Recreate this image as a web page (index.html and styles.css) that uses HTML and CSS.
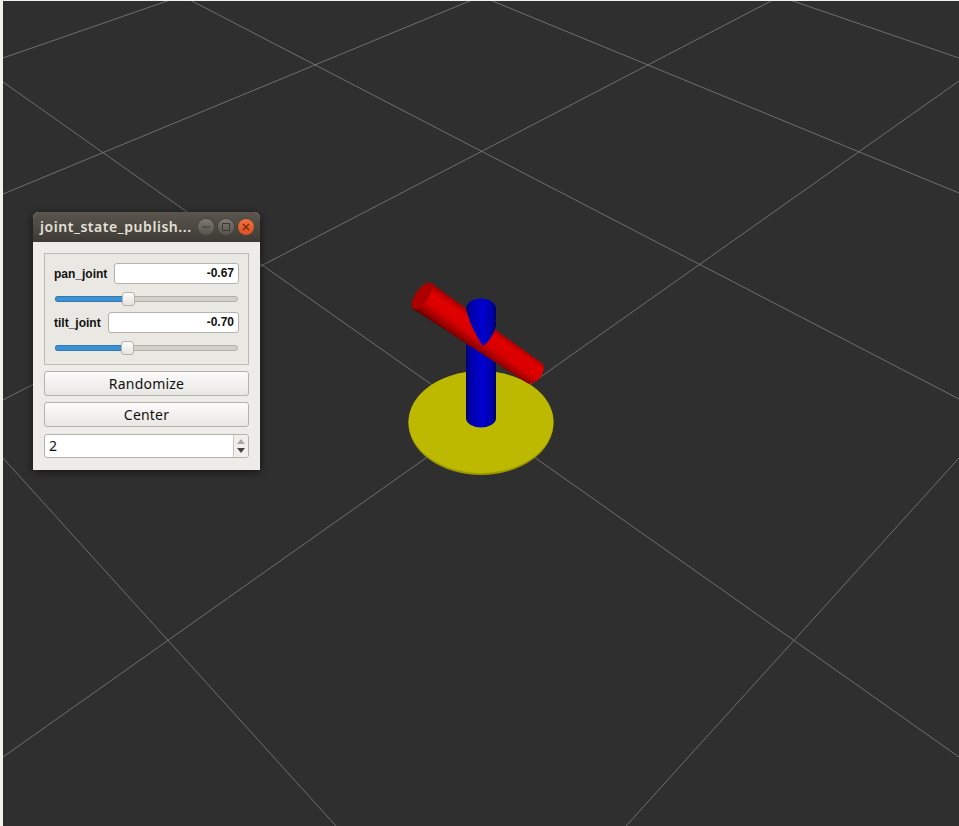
FILE: index.html
```html
<!DOCTYPE html>
<html lang="en">
<head>
    <meta charset="UTF-8">
    <title>joint_state_publisher</title>
    <link rel="stylesheet" href="styles.css">
</head>
<body>

    <!-- 3D view: floor grid and the robot -->
    <svg class="scene" viewBox="3 1 956 825" aria-hidden="true">
        <defs>
            <linearGradient id="poleBlue" gradientUnits="userSpaceOnUse" x1="466" y1="0" x2="496" y2="0">
                <stop offset="0" stop-color="#00006e"/>
                <stop offset="0.2" stop-color="#0000b0"/>
                <stop offset="0.55" stop-color="#0000d0"/>
                <stop offset="0.85" stop-color="#0000a8"/>
                <stop offset="1" stop-color="#000070"/>
            </linearGradient>
            <linearGradient id="barRed" gradientUnits="userSpaceOnUse" x1="431" y1="283" x2="413" y2="309">
                <stop offset="0" stop-color="#a00000"/>
                <stop offset="0.25" stop-color="#e00000"/>
                <stop offset="0.6" stop-color="#d80000"/>
                <stop offset="0.88" stop-color="#900000"/>
                <stop offset="1" stop-color="#600000"/>
            </linearGradient>
        </defs>

        <g class="grid">
            <line x1="3" y1="58" x2="170" y2="0"/>
            <line x1="3" y1="194" x2="472" y2="0"/>
            <line x1="3" y1="400" x2="773" y2="0"/>
            <line x1="3" y1="757" x2="959" y2="81"/>
            <line x1="626" y1="826" x2="959" y2="458"/>
            <line x1="790" y1="0" x2="959" y2="58"/>
            <line x1="490" y1="0" x2="959" y2="193"/>
            <line x1="190" y1="0" x2="959" y2="399"/>
            <line x1="3" y1="82" x2="959" y2="757"/>
            <line x1="3" y1="458" x2="336" y2="826"/>
        </g>

        <ellipse class="disc-edge" cx="481" cy="423" rx="72.5" ry="52"/>
        <ellipse class="disc" cx="481" cy="422" rx="72.5" ry="51"/>
        <path d="M466 335 L496 335 L496 418 A15 9.5 0 0 1 466 418 Z" fill="url(#poleBlue)"/>
        <path d="M431 283 L543 364 A13 9 -55 0 1 527 383 L413 309 A15 6 -55 0 1 431 283 Z" fill="url(#barRed)"/>
        <ellipse class="bar-cap" cx="422" cy="296" rx="15" ry="6.5" transform="rotate(-55 422 296)"/>
        <path d="M466 309 A15 10.5 0 0 1 496 309 L496 326 Q492 340 483 346 Q470 327 466 309 Z" fill="url(#poleBlue)"/>
    </svg>

    <div class="window">
        <div class="titlebar">
            <span class="title">joint_state_publish...</span>
            <span class="win-btn">
                <svg viewBox="0 0 16 16"><line x1="4" y1="8" x2="12" y2="8"/></svg>
            </span>
            <span class="win-btn">
                <svg viewBox="0 0 16 16"><rect x="4.5" y="4.5" width="7" height="7"/></svg>
            </span>
            <span class="win-btn close">
                <svg viewBox="0 0 16 16"><path d="M5 5 L11 11 M11 5 L5 11"/></svg>
            </span>
        </div>

        <div class="content">
            <div class="group">
                <div class="joint-row">
                    <span class="joint-label">pan_joint</span>
                    <div class="joint-value">-0.67</div>
                </div>
                <div class="slider">
                    <div class="slider-fill" style="width: 40%"></div>
                    <div class="slider-handle" style="left: 40%"></div>
                </div>
                <div class="joint-row">
                    <span class="joint-label">tilt_joint</span>
                    <div class="joint-value">-0.70</div>
                </div>
                <div class="slider">
                    <div class="slider-fill" style="width: 39.5%"></div>
                    <div class="slider-handle" style="left: 39.5%"></div>
                </div>
            </div>

            <button class="push-btn" type="button">Randomize</button>
            <button class="push-btn" type="button">Center</button>

            <div class="spinbox">
                <div class="spin-value">2</div>
                <div class="spin-arrows">
                    <span class="arrow up"></span>
                    <span class="arrow down"></span>
                </div>
            </div>
        </div>
    </div>

</body>
</html>
```

FILE: styles.css
```css
/* Page: light window frame behind the dark 3D view */
body {
    margin: 0;
    width: 959px;
    height: 826px;
    overflow: hidden;
    position: relative;
    background-color: #f2f1ec;
}
.scene {
    display: block;
    width: 956px;
    height: 825px;
    margin: 1px 0 0 3px;
    background-color: #2f2f2f;
}
.grid line {
    stroke: #7f7f7f;
    stroke-width: 0.8;
}
.disc {
    fill: #bcb900;
}
.disc-edge {
    fill: #9a9800;
}
.bar-cap {
    fill: #ad0000;
}

/* Floating tool window */
.window {
    position: absolute;
    left: 33px;
    top: 212px;
    width: 227px;
    height: 258px;
    border-radius: 6px 6px 0 0;
    background-color: #eeece8;
    box-shadow: 0 2px 10px rgba(0, 0, 0, 0.55);
}
.titlebar {
    display: flex;
    align-items: center;
    height: 30px;
    padding: 0 6px 0 7px;
    border-radius: 6px 6px 0 0;
    background: linear-gradient(#5a564e, #3e3b36);
}
.title {
    flex: 1;
    margin-bottom: 2px;
    font-family: "Noto Sans", sans-serif;
    font-size: 14px;
    font-weight: 600;
    letter-spacing: 0.55px;
    color: #e4e0d8;
    white-space: nowrap;
}
.win-btn {
    width: 16px;
    height: 16px;
    margin-left: 4px;
    border-radius: 50%;
    background: linear-gradient(#7d7a73, #56534d);
    box-shadow: 0 0 0 1px #45423d;
}
.win-btn svg {
    display: block;
    width: 16px;
    height: 16px;
    fill: none;
    stroke: #3a3833;
    stroke-width: 1;
}
.win-btn.close {
    background: linear-gradient(#f0703d, #df4f22);
}
.win-btn.close svg {
    stroke: #7a2c10;
    stroke-width: 1.5;
}
.content {
    display: flex;
    flex-direction: column;
    padding: 11px 11px 0 11px;
}

/* Joint sliders */
.group {
    height: 112px;
    box-sizing: border-box;
    padding: 9px 9px 0 9px;
    border: 1px solid #bdbab3;
    background-color: #eae8e3;
    margin-bottom: 6px;
}
.joint-row {
    display: flex;
    align-items: center;
    height: 21px;
}
.joint-label {
    margin-right: 7px;
    font-family: "Liberation Sans", Arial, sans-serif;
    font-size: 12px;
    font-weight: bold;
    color: #111;
}
.joint-value {
    flex: 1;
    height: 21px;
    box-sizing: border-box;
    padding-right: 4px;
    border: 1px solid #b5b2ab;
    border-radius: 3px;
    background-color: #fff;
    font-family: "Liberation Sans", Arial, sans-serif;
    font-size: 12px;
    font-weight: bold;
    line-height: 19px;
    text-align: right;
    color: #111;
}
.slider {
    position: relative;
    height: 6px;
    margin: 12px 1px 10px 1px;
    border: 1px solid #b3b0a9;
    box-sizing: border-box;
    border-radius: 3px;
    background-color: #d3d0ca;
}
.slider-fill {
    height: 100%;
    border-radius: 3px 0 0 3px;
    background-color: #3d90d4;
    box-shadow: 0 0 0 1px #3278b3;
}
.slider-handle {
    position: absolute;
    top: -5px;
    width: 13px;
    height: 14px;
    margin-left: -6px;
    box-sizing: border-box;
    border: 1px solid #b5b2ab;
    border-radius: 3px;
    background: linear-gradient(#fbfbfa, #e6e4df);
}

/* Buttons and spin box */
.push-btn {
    height: 25px;
    margin-bottom: 6px;
    padding: 0;
    border: 1px solid #b5b2ab;
    border-radius: 3px;
    background: linear-gradient(#fbfbfa, #e9e7e3);
    font-family: "Noto Sans", sans-serif;
    font-size: 14px;
    letter-spacing: 0.2px;
    color: #111;
}
.spinbox {
    display: flex;
    height: 24px;
    margin-top: 1px;
    box-sizing: border-box;
    border: 1px solid #b5b2ab;
    border-radius: 3px;
    background-color: #fff;
}
.spin-value {
    flex: 1;
    padding-left: 4px;
    font-family: "Noto Sans", sans-serif;
    font-size: 14px;
    line-height: 22px;
    color: #111;
}
.spin-arrows {
    display: flex;
    flex-direction: column;
    align-items: center;
    justify-content: center;
    gap: 4px;
    width: 14px;
    border-left: 1px solid #c9c6bf;
    background-color: #f1efec;
    border-radius: 0 3px 3px 0;
}
.arrow {
    width: 0;
    height: 0;
    border-left: 4px solid transparent;
    border-right: 4px solid transparent;
}
.arrow.up {
    border-bottom: 5px solid #a9a7a2;
}
.arrow.down {
    border-top: 5px solid #45433f;
}
```
